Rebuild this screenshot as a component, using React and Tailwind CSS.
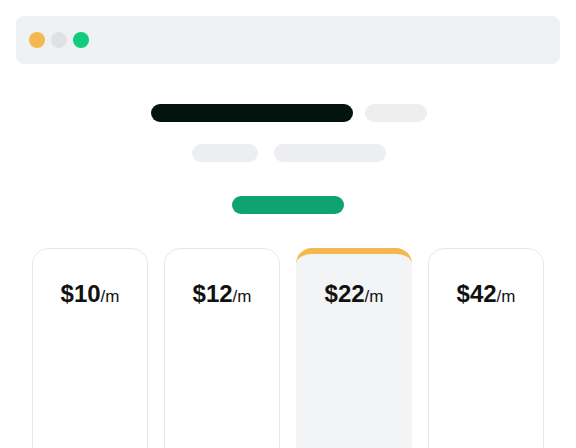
const plans = [
  { price: 10 },
  { price: 12 },
  { price: 22, featured: true },
  { price: 42 },
];

export default function App() {
  return (
    <div
      className="h-[448px] w-[576px] overflow-hidden bg-white"
      style={{ fontFamily: "'Liberation Sans', Arial, sans-serif" }}
    >
      {/* Window bar */}
      <div className="px-4 pt-4">
        <div className="flex h-[48px] items-center gap-[6px] rounded-lg bg-[#eff2f4] px-[13px]">
          <span className="h-4 w-4 rounded-full bg-[#f4b84e]" />
          <span className="h-4 w-4 rounded-full bg-[#dfe1e5]" />
          <span className="h-4 w-4 rounded-full bg-[#10cc7c]" />
        </div>
      </div>

      {/* Hero placeholder */}
      <div className="mt-[40px] flex flex-col items-center">
        <div className="flex items-center gap-3 pl-[2px]">
          <div className="h-[18px] w-[202px] rounded-full bg-[#03140f]" />
          <div className="h-[18px] w-[62px] rounded-full bg-[#eceef0]" />
        </div>
        <div className="mt-[22px] flex items-center gap-4 pl-[2px]">
          <div className="h-[18px] w-[66px] rounded-full bg-[#eceef0]" />
          <div className="h-[18px] w-[112px] rounded-full bg-[#eceef0]" />
        </div>
        <div className="mt-[34px] h-[18px] w-[112px] rounded-full bg-[#0ea371]" />
      </div>

      {/* Pricing cards */}
      <div className="mt-[34px] grid grid-cols-4 gap-4 px-8">
        {plans.map((p) => (
          <div
            key={p.price}
            className={
              p.featured
                ? "h-[220px] rounded-t-2xl border-t-[6px] border-[#f4b84e] bg-[#f3f4f6] pt-[26px] text-center"
                : "h-[220px] rounded-t-2xl border border-[#e6e7e9] bg-white pt-[31px] text-center"
            }
          >
            <span className="text-[24px] leading-[28px] font-bold text-[#111]">
              ${p.price}
            </span>
            <span className="text-[17px] leading-[28px] text-[#111]">/m</span>
          </div>
        ))}
      </div>
    </div>
  );
}
